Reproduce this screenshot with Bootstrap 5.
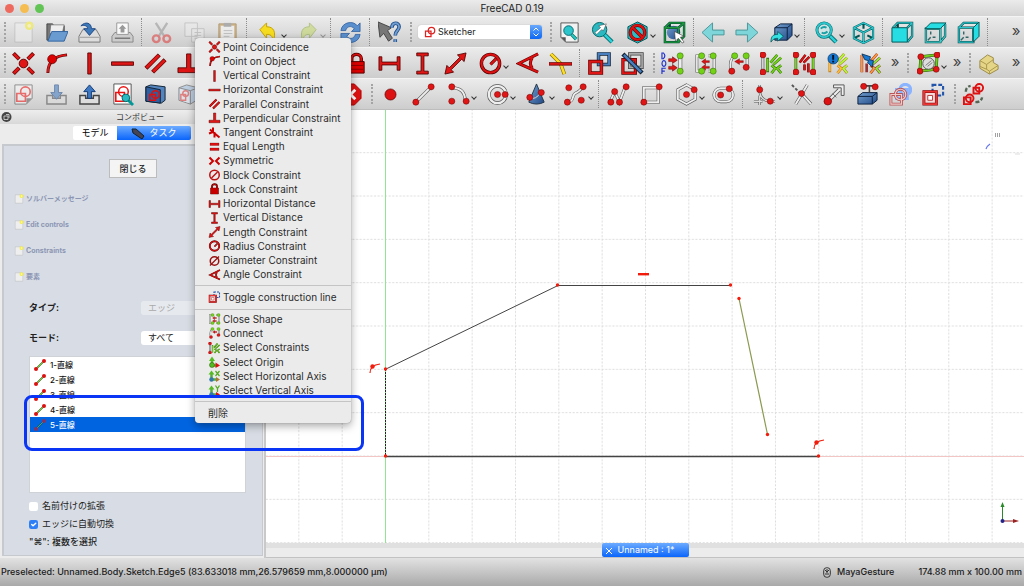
<!DOCTYPE html>
<html lang="ja">
<head>
<meta charset="utf-8">
<meta name="viewport" content="width=device-width, initial-scale=1">
<title>FreeCAD 0.19</title>
<link href="https://cdn.jsdelivr.net/npm/bootstrap@5.3.0/dist/css/bootstrap.min.css" rel="stylesheet">
<style>
body{font-family:Inter,"Noto Sans CJK JP",sans-serif;font-size:10px;line-height:14px;color:#222;background:#ececec}
.titlebar{height:16px;background:linear-gradient(#ebebeb,#d4d4d4);padding-left:5px;gap:6px}
.titlebar i{width:9px;height:9px;border-radius:50%}
.bar{height:31px;background:linear-gradient(#ebebeb,#cdcdcd);border-top:1px solid #f4f4f4;overflow:hidden}
.bar3{height:32px;border-bottom:1px solid #bdbdbd}
.tb{width:33px;height:30px;padding:0;border:0;border-radius:0;flex:none;display:flex;align-items:center;justify-content:center}
.tb svg{width:23px;height:23px;flex:none}
.dd{width:39px;justify-content:flex-start;padding-left:7px;position:relative}
.dd::after{content:"";position:absolute;left:32px;top:16px;width:4px;height:4px;border:solid #333;border-width:0 1px 1px 0;transform:rotate(45deg)}
.dim{opacity:.4}
.faded{opacity:.6}
.grip{flex:none;width:7px;height:20px;border-left:2px dotted #a4a4a4;margin-left:4px;margin-right:-4px}
.sepr{flex:none;width:6px;height:28px;border-left:1px dotted #8c8c8c;margin-left:2px;margin-right:-2px}
.more{width:16px;font-size:15px;color:#444;line-height:15px;padding-bottom:4px}
.combo{width:124px;height:14px;background:#fff;border-radius:3px;overflow:hidden;box-shadow:0 0 1px #999;margin:0 4px 0 5px}
.combo select,.fld{border:0;background:#fff;appearance:none;padding:0;min-width:0;color:#222;outline:0}
.combo select{font-size:9px;height:14px}
.combo .ico{width:12px;height:12px;margin:0 2px 0 6px}
.step{width:12px;height:14px;background:linear-gradient(#6aa9fb,#0a66f3)}
.dock{width:266px;border-right:2px solid #c9c9c9}
.docktitle{height:14px;background:linear-gradient(#ededed,#d8d8d8);font-size:8px;color:#333}
.docktitle svg{left:1px;top:1px}
.tabs{height:20px;padding-top:2px;padding-left:73px}
.tabs button{height:14px;border:0;padding:0;font-size:9px;line-height:14px;background:#fff;width:44px;border-radius:2px 0 0 2px}
.tabs .on{width:74px;background:linear-gradient(#6cabff,#0a65fb);color:#fff;border-radius:0 2px 2px 0}
.pane{background:#d8dde5;border:2px solid #c6c9cd;border-bottom-width:1px;border-right-width:1px;margin:0 1px 2px 2px;padding:13px 16px 0 25px;font-size:9px}
.closebtn{width:48px;height:19px;font-size:9px;line-height:14px;padding:0;border:1px solid #bcbcbc;border-radius:0;background:#f4f4f4;margin-left:80px;font-weight:500}
.sect{height:26px;margin-left:-15px;font-size:7px;font-weight:700;color:#8c96b4;text-decoration:none;gap:2px}
.sect svg{width:10px;height:12px}
.forms{margin-top:3px}
.frow{height:30px;font-weight:700}
.frow label{width:112px}
.fld{height:14px;border-radius:3px;flex:1;padding-left:7px;font-size:9px;line-height:14px}
.fld:disabled{background:#e6e9ee;color:#aaa;opacity:1}
.edges{height:137px;background:#fff;border:1px solid #cfd2d6;font-size:8px;font-weight:500;margin:3px 0 4px}
.edges li{height:15px;padding-left:4px;gap:4px;color:#111}
.edges .sel{background:#0064e1;color:#fff}
.edges svg{width:12px;height:12px}
.crow{height:18px;gap:4px}
.crow input{width:9px;height:9px;margin:0;border-radius:2px;border:0;background-color:#fff}
.crow input:checked{background-color:#2f80f7}
.view{background:#fff}
.view svg{display:block;width:100%;height:100%;position:absolute}
.view .cube{width:70px;height:60px}
.view .triad{width:36px;height:50px}
.doctabs{height:15px;background:linear-gradient(#e0e0e0 5px,#ececec 5px);border-bottom:1px solid #c2c2c2}
.doctabs button{width:87px;height:14px;border:0;border-radius:2px;background:linear-gradient(#6cabff,#0a65fb);color:#fff;font-size:9px;line-height:14px;padding:0 0 0 3px;text-align:left}
.status{height:28px;background:linear-gradient(#e2e2e2,#a9a9a9);padding:0 2px 0 1px;font-size:9px;font-weight:500;color:#1a1a1a}
.status .navi{gap:6px}
.ctx{position:absolute;left:195px;top:38px;width:156px;height:385px;background:#ebebeb;border-radius:4px;box-shadow:0 3px 9px rgba(0,0,0,.35),0 0 1px #888;z-index:5;padding-top:2px}
.ctx div{display:grid;grid-auto-rows:1fr}
.ctx .g1{height:242px}.ctx .g2{height:18px}.ctx .g3{height:86px}
.ctx hr{margin:3px 0 2px;border-color:#aaa;opacity:.6}
.ctx button{border:0;background:none;display:flex;align-items:center;gap:2px;padding:0 0 0 13px;line-height:13px;color:#2c2c2c;text-align:left;white-space:nowrap}
.ctx svg{width:13px;height:12px;flex:none}
.ring{position:absolute;left:24px;top:395px;width:340px;height:56px;border:3px solid #0a35f5;border-radius:8px;z-index:6;pointer-events:none}
</style>
</head>
<body class="d-flex flex-column min-vh-100 m-0">
<svg width="0" height="0" class="position-absolute">
<defs>
<linearGradient id="bl" x2="1" y2="1"><stop stop-color="#729fcf"/><stop offset="1" stop-color="#204a87"/></linearGradient>
<g id="d"><circle r="3.2" fill="#e01515" stroke="#600" stroke-width=".5"/></g>
<g id="gd"><circle r="3.2" fill="#73d216" stroke="#2d5c07" stroke-width=".5"/></g>
</defs>
<symbol id="new" viewBox="0 0 24 24"><path d="M3 2h18v20H3z" fill="#eee" stroke="#aaa" stroke-width=".8"/><circle cx="18" cy="5" r="4.5" fill="#f6ee3c"/><circle cx="18" cy="5" r="2" fill="#fff9b0"/></symbol>
<symbol id="open" viewBox="0 0 24 24"><path d="M2 20V3h6l1 2h11v14z" fill="#777" stroke="#444"/><path d="M6 4h14l-2 9H5z" fill="#eee" stroke="#666" stroke-width=".7"/><path d="M7 11h17l-4 10H3z" fill="#6a9bd0" stroke="#34659f"/></symbol>
<symbol id="save" viewBox="0 0 24 24"><path d="M5 9h14l4 7v6H1v-6z" fill="#ddd" stroke="#777"/><path d="M2 17h20" stroke="#999"/><path d="M3 5c5-5 11-3 11 3h4l-6 7-6-7h4c0-3-3-4-7-3z" fill="#3d78b8" stroke="#204a87"/></symbol>
<symbol id="print" viewBox="0 0 24 24"><path d="M4 12h16l3 4v6H1v-6z" fill="#ccc" stroke="#888"/><path d="M6 2h12v12H6z" fill="#fafafa" stroke="#999"/><path d="M12 4l4 4h-2v4h-4V8H8z" fill="#999"/><path d="M4 18h16" stroke="#777" stroke-width="1.5"/></symbol>
<symbol id="cut" viewBox="0 0 24 24"><path d="M6 2l9 14M18 2L9 16" stroke="#999" stroke-width="2.4"/><circle cx="6.500" cy="18.500" r="3.500" fill="none" stroke="#d44" stroke-width="2.500"/><circle cx="17.500" cy="18.500" r="3.500" fill="none" stroke="#d44" stroke-width="2.500"/></symbol>
<symbol id="copy" viewBox="0 0 24 24"><path d="M2 2h13v14H2zM9 8h13v14H9z" fill="#eee" stroke="#999"/><path d="M12 12h7m-7 3h7m-7 3h5" stroke="#999"/></symbol>
<symbol id="paste" viewBox="0 0 24 24"><path d="M3 3h18v20H3z" fill="#c49a56" stroke="#8f6a2a"/><path d="M5 5h14v16H5z" fill="#f4f4f4"/><path d="M8 2h8v4H8z" fill="#888"/><path d="M8 10h9m-9 3h9m-9 3h6" stroke="#aaa"/></symbol>
<symbol id="undo" viewBox="0 0 24 24"><path d="M3 9l7-7v4c8 0 10 6 7 15-1-6-3-7-7-7v4z" fill="#f5dc1f" stroke="#c4a000"/></symbol>
<symbol id="redo" viewBox="0 0 24 24"><path d="M21 9l-7-7v4c-8 0-10 6-7 15 1-6 3-7 7-7v4z" fill="#b8d43c" stroke="#6a9000"/></symbol>
<symbol id="refresh" viewBox="0 0 24 24"><path d="M2 10C3 1 15-1 19 5l3-3v9h-9l3-3C12 4 8 6 7 10zM22 14c-1 9-13 11-17 5l-3 3v-9h9l-3 3c4 4 8 2 9-2z" fill="#5a8fce" stroke="#2c5c9c" stroke-width=".8"/></symbol>
<symbol id="help" viewBox="0 0 24 24"><path d="M0 1l14 6-4 3 5 8-4 3-5-8-4 4z" fill="#777" stroke="#444"/><path d="M14.500 7c0-6 7.500-6 7.500-1 0 4-4 4-4 9m0 4v3" fill="none" stroke="#1f4d8c" stroke-width="3.800"/><path d="M14.500 7c0-6 7.500-6 7.500-1 0 4-4 4-4 9m0 4v3" fill="none" stroke="#729fcf" stroke-width="1.900"/></symbol>
<symbol id="sk" viewBox="0 0 24 24"><path d="M3 10h11v11H3z" fill="none" stroke="#d22" stroke-width="2.500"/><circle cx="15" cy="9" r="6.500" fill="none" stroke="#d22" stroke-width="2.500"/></symbol>
<symbol id="fit" viewBox="0 0 24 24"><path d="M3 2h18v20H8l-5-5z" fill="#f2f2f2" stroke="#555"/><path d="M3 17h5v5z" fill="#555"/><path d="M14 14l5 5" stroke="#075" stroke-width="3.500"/><path d="M14 14l5 5" stroke="#2cc5cc" stroke-width="2"/><circle cx="11" cy="10" r="5" fill="#2cc5cc" stroke="#0a6a70"/></symbol>
<symbol id="fitsel" viewBox="0 0 24 24"><path d="M14 14l8 8" stroke="#066" stroke-width="4.500"/><path d="M14 14l8 8" stroke="#2cd0d8" stroke-width="2.800"/><circle cx="9" cy="9" r="7.500" fill="#2cb8c0" stroke="#066"/><path d="M4 12l6-5-2-2 8-2-3 7-2-1-5 5z" fill="#fff" stroke="#333" stroke-width=".5"/></symbol>
<symbol id="style" viewBox="0 0 24 24"><path d="M12 1l10 5v12l-10 5-10-5V6z" fill="#25bfc9" stroke="#055"/><circle cx="12" cy="12" r="7.500" fill="none" stroke="#700" stroke-width="3.500"/><path d="M7 7l10 10" stroke="#700" stroke-width="3.500"/><circle cx="12" cy="12" r="7.500" fill="none" stroke="#d11" stroke-width="2.200"/><path d="M7 7l10 10" stroke="#d11" stroke-width="2.200"/></symbol>
<symbol id="bbox" viewBox="0 0 24 24"><circle cx="11" cy="12" r="7" fill="url(#bl)"/><path d="M2 7h14v15H2zM2 7l5-5h15v14l-6 6M16 7l6-5M7 2v4" fill="none" stroke="#043" stroke-width="2.500"/><path d="M2 7h14v15H2zM2 7l5-5h15v14l-6 6M16 7l6-5" fill="none" stroke="#1c9a3c" stroke-width="1.400"/><path d="M12 11l10 5-4 1 4 5-2 1-4-5-3 3z" fill="#fff" stroke="#333" stroke-width=".6"/></symbol>
<symbol id="left" viewBox="0 0 24 24"><path d="M0 12L11 2v7.500h12v5H11V22z" fill="#7fd6da" stroke="#4c9599"/></symbol>
<symbol id="right" viewBox="0 0 24 24"><path d="M24 12L13 2v7.500H1v5h12V22z" fill="#7fd6da" stroke="#4c9599"/></symbol>
<symbol id="link" viewBox="0 0 24 24"><path d="M5 7l6-4h12v12l-5 5H5z" fill="url(#bl)" stroke="#0b1f3d"/><path d="M5 7h13v13M18 7l5-4" fill="none" stroke="#0b1f3d"/><path d="M1 22c0-7 3-8 7-8v-3l6 5-6 5v-3c-3 0-5 1-7 4z" fill="#34e0e2" stroke="#055" stroke-width=".8"/></symbol>
<symbol id="zoomi" viewBox="0 0 24 24"><path d="M14 14l8 8" stroke="#066" stroke-width="4.500"/><path d="M14 14l8 8" stroke="#2cd0d8" stroke-width="2.800"/><circle cx="9.500" cy="9.500" r="7.500" fill="#cfe4e4" stroke="#066" stroke-width="3"/><circle cx="9.500" cy="9.500" r="7.500" fill="none" stroke="#2cc5cc" stroke-width="2"/><path d="M6 8q3-3 6-1m1 4q-3 3-6 1" fill="none" stroke="#1aa0a5" stroke-width="2"/></symbol>
<symbol id="iso" viewBox="0 0 24 24"><path d="M12 2l10 5v11l-10 5-10-5V7zM2 7l10 5 10-5M12 12v11M12 2v6M2 18l6-3m14 3l-6-3" fill="none" stroke="#055" stroke-width="2.200"/><path d="M12 2l10 5v11l-10 5-10-5V7zM2 7l10 5 10-5M12 12v11" fill="none" stroke="#2cc9d0" stroke-width="1.300"/></symbol>
<symbol id="front" viewBox="0 0 24 24"><path d="M2 7l5-5h15v14l-5 6M17 7l5-5M7 2v6" fill="none" stroke="#044" stroke-width="2.400"/><path d="M2 7l5-5h15v14l-5 6M17 7l5-5" fill="none" stroke="#2cc5cc" stroke-width="1.300"/><path d="M1 7h16v15H1z" fill="#25dde3" stroke="#055"/></symbol>
<symbol id="top" viewBox="0 0 24 24"><path d="M2 8h15v14H2zM22 3v13l-5 6" fill="none" stroke="#044" stroke-width="2.400"/><path d="M2 8h15v14H2zM22 3v13l-5 6" fill="none" stroke="#4cc" stroke-width="1.300"/><path d="M7 11v3m0 3l-3 3M9 17h3" stroke="#366" stroke-width="1.500"/><path d="M1 8l6-6h16l-6 6z" fill="#25dde3" stroke="#055"/></symbol>
<symbol id="rightv" viewBox="0 0 24 24"><path d="M2 7h15v15H2zM2 7l5-5h15" fill="none" stroke="#044" stroke-width="2.400"/><path d="M2 7h15v15H2zM2 7l5-5h15" fill="none" stroke="#2cc5cc" stroke-width="1.300"/><path d="M7 11v3m0 3l-3 3M9 17h3" stroke="#366" stroke-width="1.500"/><path d="M17 7l6-6v15l-6 6z" fill="#25dde3" stroke="#055"/></symbol>
<symbol id="coin" viewBox="0 0 24 24"><path d="M1.500 1.500l6 6m9 9l6 6m0-21l-6 6m-9 9l-6 6" stroke="#600" stroke-width="4.200"/><path d="M2 2l5 5m10 10l5 5m0-20l-5 5M7 17l-5 5" stroke="#e01515" stroke-width="2.800"/><circle cx="12" cy="12" r="4.500" fill="#e01515" stroke="#600"/></symbol>
<symbol id="pobj" viewBox="0 0 24 24"><path d="M3 22C3 10 10 4 23 3" fill="none" stroke="#500" stroke-width="3"/><path d="M3 21.500C3 10 10 4 22.500 3" fill="none" stroke="#e01515" stroke-width="1.900"/><circle cx="7.500" cy="7.500" r="4.700" fill="#d00" stroke="#500" stroke-width=".7"/></symbol>
<symbol id="vert" viewBox="0 0 24 24"><path d="M10.200 1h3.600v22h-3.600z" fill="#e01515" stroke="#500" stroke-width=".9"/></symbol>
<symbol id="hori" viewBox="0 0 24 24"><path d="M.5 10.300h23v3.600h-23z" fill="#e01515" stroke="#500" stroke-width=".9"/></symbol>
<symbol id="para" viewBox="0 0 24 24"><path d="M2 17L16 3M9 21L22 8" stroke="#600" stroke-width="4.400"/><path d="M2.500 16.500l13-13M9.500 20.500l12-12" stroke="#e01515" stroke-width="3"/></symbol>
<symbol id="perp" viewBox="0 0 24 24"><path d="M10 2h4.500v14.500H23v5H1v-5h9z" fill="#e01515" stroke="#500" stroke-width=".9"/></symbol>
<symbol id="tang" viewBox="0 0 24 24"><path d="M3 5l19 16M9 1v9l-8 3m11-3v11" fill="none" stroke="#c00" stroke-width="4"/></symbol>
<symbol id="equal" viewBox="0 0 24 24"><path d="M3 4h18v5H3zM3 14h18v5H3z" fill="#d11" stroke="#500" stroke-width=".5"/></symbol>
<symbol id="symm" viewBox="0 0 24 24"><path d="M2 5l7 7-7 7M22 5l-7 7 7 7" fill="none" stroke="#c00" stroke-width="4"/></symbol>
<symbol id="block" viewBox="0 0 24 24"><circle cx="12" cy="12" r="9.500" fill="none" stroke="#b11" stroke-width="3"/><path d="M18 6L6 18" stroke="#b11" stroke-width="3"/></symbol>
<symbol id="lock" viewBox="0 0 24 24"><path d="M7 11V7c0-6 10-6 10 0v4" fill="none" stroke="#500" stroke-width="3.600"/><path d="M7 11V7c0-6 10-6 10 0v4" fill="none" stroke="#d11" stroke-width="2"/><path d="M4 10h16v12H4z" fill="#d00" stroke="#500"/><path d="M5 14h14M5 18h14" stroke="#800"/></symbol>
<symbol id="hd" viewBox="0 0 24 24"><path d="M1 5h3v5.500h16V5h3v14h-3v-5.500H4V19H1z" fill="#e01515" stroke="#500" stroke-width=".9"/></symbol>
<symbol id="vd" viewBox="0 0 24 24"><path d="M6 1h12v3h-4.500v16H18v3H6v-3h4.500V4H6z" fill="#e01515" stroke="#500" stroke-width=".9"/></symbol>
<symbol id="len" viewBox="0 0 24 24"><path d="M23 1l-2 9-2.500-2.500-11 11L10 21l-9 2 2-9 2.500 2.500 11-11L14 3z" fill="#e01515" stroke="#500" stroke-width=".9"/></symbol>
<symbol id="rad" viewBox="0 0 24 24"><circle cx="12" cy="12" r="9.500" fill="none" stroke="#500" stroke-width="3.600"/><path d="M12 13l6-6" stroke="#500" stroke-width="3.400"/><circle cx="12" cy="12" r="9.500" fill="none" stroke="#d11" stroke-width="2.300"/><path d="M12 13l6-6" stroke="#d11" stroke-width="2"/></symbol>
<symbol id="dia" viewBox="0 0 24 24"><circle cx="12" cy="12" r="8.500" fill="none" stroke="#911" stroke-width="3"/><path d="M21 3L3 21" stroke="#911" stroke-width="2.600"/></symbol>
<symbol id="ang" viewBox="0 0 24 24"><path d="M23 2L3 12l20 9M17 6q-4 6 0 11" fill="none" stroke="#600" stroke-width="3.200"/><path d="M23 2L3 12l20 9M17 6q-4 6 0 11" fill="none" stroke="#d11" stroke-width="2"/></symbol>
<symbol id="snell" viewBox="0 0 24 24"><path d="M2 2l10 10 4 11" fill="none" stroke="#760" stroke-width="3.800"/><path d="M2 2l10 10 4 11" fill="none" stroke="#fd2" stroke-width="2.600"/><path d="M0 11h24v2.800H0z" fill="#e01515" stroke="#500" stroke-width=".7"/></symbol>
<symbol id="tog" viewBox="0 0 24 24"><path d="M11 2h11v11H11z" fill="none" stroke="#123" stroke-width="3.600"/><path d="M11 2h11v11H11z" fill="none" stroke="#4a7fc0" stroke-width="2.200"/><path d="M2 10h12v12H2z" fill="none" stroke="#500" stroke-width="3.600"/><path d="M2 10h12v12H2z" fill="none" stroke="#e01515" stroke-width="2.300"/></symbol>
<symbol id="act" viewBox="0 0 24 24"><path d="M9 2h13v14H9z" fill="none" stroke="#444" stroke-width="3.300"/><path d="M9 2h13v14H9z" fill="none" stroke="#aaa" stroke-width="1.700"/><path d="M2 8h13v14H2z" fill="none" stroke="#500" stroke-width="3.300"/><path d="M2 8h13v14H2z" fill="none" stroke="#e01515" stroke-width="2"/><path d="M2 2l20 20" stroke="#123" stroke-width="4.500"/><path d="M3 3l18 18" stroke="#4a7fc0" stroke-width="2.600"/></symbol>
<symbol id="dof" viewBox="0 0 24 24"><g fill="none" stroke="#23c" stroke-width="1.200"><path d="M1 1v6h1.500q3-3 0-6zM3 9a2 3 0 1 0 .1 0zM1 23v-6h4M1 20h3"/></g><path d="M20 4v16" stroke="#666" stroke-width="4.400"/><path d="M20 4v16" stroke="#eee" stroke-width="3"/><path d="M8 7h4V5l5 3.500L12 12v-2H8zM8 15h4v-2l5 3.500L12 20v-2H8z" fill="#e01515" stroke="#500" stroke-width=".5"/><use href="#gd" x="20" y="4"/><use href="#gd" x="20" y="20"/></symbol>
<symbol id="close" viewBox="0 0 24 24"><path d="M9 4H3v16h6M15 20h6V4h-6" fill="none" stroke="#666" stroke-width="3"/><path d="M9 4H3v16h6M15 20h6V4h-6" fill="none" stroke="#eee" stroke-width="1.700"/><path d="M16 9h-4V7L8 10l4 3v-2h4zM16 15h-4v-2l-4 3 4 3v-2h4z" fill="#d11" stroke="#500" stroke-width=".4"/><use href="#gd" x="8" y="4"/><use href="#gd" x="8" y="20"/><use href="#gd" x="20" y="4"/><use href="#gd" x="20" y="20"/></symbol>
<symbol id="conn" viewBox="0 0 24 24"><path d="M8 4Q2 8 4 18M21 4v14" fill="none" stroke="#666" stroke-width="3"/><path d="M8 4Q2 8 4 18M21 4v14" fill="none" stroke="#eee" stroke-width="1.700"/><path d="M17 9h-4V7L8 10l5 3v-2h4z" fill="#d11" stroke="#500" stroke-width=".4"/><use href="#gd" x="8" y="4"/><use href="#gd" x="20" y="4"/><use href="#d" x="5" y="20"/><use href="#d" x="20" y="16"/></symbol>
<symbol id="selc" viewBox="0 0 24 24"><path d="M3 3v18" stroke="#555" stroke-width="3"/><path d="M3 3v18" stroke="#eee" stroke-width="1.500"/><path d="M8 6v15M11 11l7-8M14 13l8-7M12 14l4 3-4 5M22 14l-4 3 4 5" fill="none" stroke="#2d6c07" stroke-width="2.800"/><path d="M8 7v13M11 11l7-8M14 13l8-7M12 14l4 3-4 5M22 14l-4 3 4 5" fill="none" stroke="#73d216" stroke-width="1.800"/><use href="#d" x="3" y="3"/><use href="#d" x="3" y="21"/></symbol>
<symbol id="sele" viewBox="0 0 24 24"><path d="M3 3v18M21 3v18" stroke="#2d5c07" stroke-width="2.800"/><path d="M3 3v18M21 3v18" stroke="#8d3" stroke-width="1.600"/><path d="M7 11l6-8M11 11l6-6M12 13v6M16 12v9" stroke="#500" stroke-width="2.600"/><path d="M7 11l6-8M11 11l6-6M12 13v6M16 12v9" stroke="#d11" stroke-width="1.800"/><use href="#d" x="3" y="3"/><use href="#d" x="3" y="21"/><use href="#d" x="21" y="3"/><use href="#d" x="21" y="21"/></symbol>
<symbol id="red" viewBox="0 0 24 24"><path d="M4 6v15M12 10l7-8M14 13l8-7M12 14l4 3-4 5M22 14l-4 3 4 5" fill="none" stroke="#b72" stroke-width="2.800"/><path d="M4 7v13M12 14l4 3-4 5" fill="none" stroke="#fb3" stroke-width="1.800"/><path d="M12 10l7-8M14 13l8-7M22 14l-4 3 4 5" fill="none" stroke="#af3" stroke-width="1.800"/><circle cx="7.500" cy="7" r="5.500" fill="#1779d4" stroke="#024" stroke-width=".6"/><path d="M7.500 3v5m0 1v2" stroke="#012" stroke-width="2"/></symbol>
<symbol id="conf" viewBox="0 0 24 24"><path d="M3 3v18M8 12v9M12 10l7-8M14 13l8-7M12 14l4 3-4 5M22 14l-4 3 4 5" fill="none" stroke="#933" stroke-width="2.800"/><path d="M3 3v18M12 10l7-8M12 14l4 3-4 5" fill="none" stroke="#f93" stroke-width="1.800"/><path d="M14 13l8-7M22 14l-4 3 4 5" fill="none" stroke="#8e3" stroke-width="1.800"/><path d="M3 2l9 3-1 3 4 1-1 7-5-5 1-2-4-1z" fill="#1779d4" stroke="#024" stroke-width=".8"/></symbol>
<symbol id="intal" viewBox="0 0 24 24"><path d="M4 5L21 3l-1 15-17 2z" fill="none" stroke="#250" stroke-width="3"/><path d="M4 5L21 3l-1 15-17 2z" fill="none" stroke="#7c2" stroke-width="2"/><circle cx="12" cy="12" r="6" fill="#ddd" stroke="#555"/><path d="M9 14l6-5m-4 6l5-4" stroke="#777"/><use href="#d" x="4" y="5"/><use href="#d" x="21" y="3"/><use href="#d" x="20" y="18"/><use href="#d" x="3" y="20"/></symbol>
<symbol id="pad" viewBox="0 0 24 24"><path d="M3 9l8-6 6 3v5l5 3v4l-9 5-10-6z" fill="#e5d586" stroke="#9a8a48"/><path d="M3 9l7 4 7-5m-7 5v5l3 2 9-6m-9 6v3M3 15l7 3" fill="none" stroke="#a8964c"/></symbol>
<symbol id="nsk" viewBox="0 0 24 24"><path d="M3 2h18v14l-6 6H3z" fill="#f4f4f4" stroke="#555"/><path d="M15 22v-6h6z" fill="#666"/><path d="M5 11h9v8H5z" fill="none" stroke="#e22" stroke-width="1.700"/><circle cx="14" cy="9" r="5" fill="none" stroke="#e22" stroke-width="1.700"/></symbol>
<symbol id="tray" viewBox="0 0 24 24"><path d="M2 13h6v3h8v-3h6v9H2z" fill="#ddd" stroke="#555" stroke-width="1.500"/><path d="M10 2h4v8h4l-6 7-6-7h4z" fill="#4a80c0" stroke="#204a87"/></symbol>
<symbol id="leave" viewBox="0 0 24 24"><path d="M2 13h6v3h8v-3h6v9H2z" fill="#ddd" stroke="#444" stroke-width="1.500"/><path d="M10 16V9H6l6-7 6 7h-4v7z" fill="#3d78c0" stroke="#123a77"/></symbol>
<symbol id="vsk" viewBox="0 0 24 24"><path d="M3 1h18v21H3z" fill="#fff" stroke="#555"/><path d="M5 10h9v9H5z" fill="none" stroke="#e11" stroke-width="1.600"/><circle cx="13" cy="9" r="5" fill="none" stroke="#e11" stroke-width="1.600"/><path d="M17 17l6 6" stroke="#099" stroke-width="3"/><circle cx="15.500" cy="15.500" r="4" fill="#2cb8c0" stroke="#066"/></symbol>
<symbol id="vsec" viewBox="0 0 24 24"><path d="M2 4l5-2 15 2v14l-4 3L2 19z" fill="#5484bd" stroke="#123"/><path d="M2 4l15 3v14L2 19z" fill="#2f5f9f" stroke="#123"/><path d="M6 12h6v6H6z" fill="none" stroke="#d11" stroke-width="1.600"/><circle cx="12" cy="12" r="4" fill="none" stroke="#d11" stroke-width="1.600"/></symbol>
<symbol id="map" viewBox="0 0 24 24"><path d="M2 5l8-3 12 3v12l-8 5-12-4z" fill="#a9c4e3" stroke="#555"/><path d="M2 5l12 3v14M14 8l8-3" fill="none" stroke="#555"/><path d="M3 6l10 3v12L3 18z" fill="#e4eaf2"/><circle cx="9" cy="11" r="3" fill="none" stroke="#d44" stroke-width="1.500"/><path d="M4 12h5v6H4z" fill="none" stroke="#d44" stroke-width="1.500"/></symbol>
<symbol id="stop" viewBox="0 0 24 24"><path d="M8 1h8l7 7v8l-7 7H8l-7-7V8z" fill="#d11" stroke="#a00"/><path d="M7 7l10 10M17 7L7 17" stroke="#fff" stroke-width="3"/></symbol>
<symbol id="pt" viewBox="0 0 24 24"><circle cx="12" cy="12" r="5.800" fill="#d11" stroke="#500" stroke-width=".7"/></symbol>
<symbol id="line" viewBox="0 0 24 24"><path d="M5 19L19 5" stroke="#555" stroke-width="3.200"/><path d="M5 19L19 5" stroke="#eee" stroke-width="2"/><use href="#d" x="4" y="20"/><use href="#d" x="20" y="4"/></symbol>
<symbol id="arc" viewBox="0 0 24 24"><path d="M5 5Q19 5 19 19" fill="none" stroke="#555" stroke-width="3.200"/><path d="M5 5Q19 5 19 19" fill="none" stroke="#eee" stroke-width="2"/><use href="#d" x="5" y="4"/><use href="#d" x="5" y="19"/><use href="#d" x="20" y="19"/></symbol>
<symbol id="circ" viewBox="0 0 24 24"><circle cx="12" cy="12" r="9" fill="none" stroke="#555" stroke-width="3.800"/><circle cx="12" cy="12" r="9" fill="none" stroke="#eee" stroke-width="2.500"/><use href="#d" x="12" y="12"/><use href="#d" x="20" y="12"/></symbol>
<symbol id="cone" viewBox="0 0 24 24"><path d="M12 1l8 19q-8 4-16 0z" fill="url(#bl)" stroke="#234"/><path d="M4 15q7 4 13-6" fill="none" stroke="#ddd"/><use href="#d" x="5" y="15"/><use href="#d" x="17" y="10"/></symbol>
<symbol id="bsp" viewBox="0 0 24 24"><path d="M4 20c8-1 3-8 9-10 3-1 4-3 7-6" fill="none" stroke="#555" stroke-width="3"/><path d="M4 20c8-1 3-8 9-10 3-1 4-3 7-6" fill="none" stroke="#eee" stroke-width="1.900"/><use href="#d" x="3.500" y="20"/><use href="#d" x="5" y="5"/><use href="#d" x="20" y="4"/><use href="#d" x="18" y="18"/></symbol>
<symbol id="poly" viewBox="0 0 24 24"><path d="M3 20L8 9l5 11 6-16" fill="none" stroke="#555" stroke-width="3"/><path d="M3 20L8 9l5 11 6-16" fill="none" stroke="#eee" stroke-width="1.900"/><use href="#d" x="4" y="20"/><use href="#d" x="8" y="9"/><use href="#d" x="13" y="20"/><use href="#d" x="20" y="4"/></symbol>
<symbol id="rect" viewBox="0 0 24 24"><path d="M4 5h15v15H4z" fill="none" stroke="#555" stroke-width="3.200"/><path d="M4 5h15v15H4z" fill="none" stroke="#eee" stroke-width="2"/><use href="#d" x="4" y="20"/><use href="#d" x="20" y="4"/></symbol>
<symbol id="hex" viewBox="0 0 24 24"><path d="M12 2l9 5v10l-9 5-9-5V7z" fill="none" stroke="#555" stroke-width="3"/><path d="M12 2l9 5v10l-9 5-9-5V7z" fill="none" stroke="#eee" stroke-width="1.900"/><use href="#d" x="12" y="12"/><use href="#d" x="20" y="7"/></symbol>
<symbol id="slot" viewBox="0 0 24 24"><rect x="2" y="5.500" width="20" height="14" rx="7" fill="none" stroke="#555" stroke-width="3"/><rect x="2" y="5.500" width="20" height="14" rx="7" fill="none" stroke="#eee" stroke-width="1.900"/><use href="#d" x="9" y="12.500"/><use href="#d" x="18" y="6"/></symbol>
<symbol id="fil" viewBox="0 0 24 24"><path d="M7 2v7q1 9 10 10h6M10 19H1m6-6v10" fill="none" stroke="#555" stroke-width="2.600"/><path d="M7 2v7q1 9 10 10h6M10 19H1m6-6v10" fill="none" stroke="#ddd" stroke-width="1.400"/><use href="#d" x="7" y="7"/><use href="#d" x="18" y="19"/></symbol>
<symbol id="trim" viewBox="0 0 24 24"><path d="M18 2L6 22M12 11l10 11" stroke="#555" stroke-width="3.200"/><path d="M18 2L6 22M12 11l10 11" stroke="#eee" stroke-width="2"/><path d="M2 2l9 9" stroke="#555" stroke-width="2" stroke-dasharray="3 2"/><use href="#d" x="12" y="11"/></symbol>
<symbol id="ext" viewBox="0 0 24 24"><path d="M5 19l12-12" stroke="#555" stroke-width="4"/><path d="M5 19l13-13" stroke="#eee" stroke-width="2.400"/><path d="M11 2h11v11h-3V5h-8z" fill="#eee" stroke="#555"/><path d="M10 11l4 4" stroke="#555" stroke-width=".8"/><circle cx="5" cy="19" r="4" fill="#d11" stroke="#500" stroke-width=".6"/></symbol>
<symbol id="xgeo" viewBox="0 0 24 24"><path d="M2 14l5-4h15v8l-5 4H2z" fill="url(#bl)" stroke="#0b1f3d"/><path d="M2 14h15v8m0-8l5-4" fill="none" stroke="#0b1f3d"/><path d="M8 3h12M14 4v6" stroke="#444" stroke-width="1.600"/><use href="#d" x="8" y="3.500"/><use href="#d" x="20" y="4"/></symbol>
<symbol id="carb" viewBox="0 0 24 24"><g fill="none" stroke="#8ab4ff" stroke-width="3.400"><path d="M8 7h11v9H8z"/><circle cx="17" cy="7" r="5.500"/></g><g fill="none" stroke="#b55" stroke-width="3"><path d="M2 12h11v10H2z"/><circle cx="12" cy="12" r="5.500"/></g><g fill="none" stroke="#ecc" stroke-width="1.200"><path d="M2 12h11v10H2z"/><circle cx="12" cy="12" r="5.500"/></g></symbol>
<symbol id="cons" viewBox="0 0 24 24"><path d="M11 2h11v11H11z" fill="none" stroke="#25a" stroke-width="2.200" stroke-dasharray="4 2"/><path d="M2 9h13v13H2z" fill="#f3dcdc" stroke="#700" stroke-width="3"/><path d="M2 9h13v13H2z" fill="none" stroke="#e33" stroke-width="2"/><path d="M6 13h5v5H6z" fill="#fff" stroke="#b33"/></symbol>
<symbol id="mir" viewBox="0 0 24 24"><g fill="none" stroke="#d11" stroke-width="2"><path d="M12 5h6v6h-6zM2 15h7v7H2z"/><circle cx="18" cy="5" r="4"/><circle cx="8" cy="16" r="4"/></g><path d="M4 9q0-5 5-6M14 20q6 0 7-5" fill="none" stroke="#565" stroke-width="2.500" stroke-dasharray="4 2"/></symbol>
<symbol id="eline" viewBox="0 0 24 24"><path d="M4 20L20 4" stroke="#250" stroke-width="3.500"/><path d="M4 20L20 4" stroke="#7c3" stroke-width="2"/><circle cx="4" cy="20" r="4" fill="#d11"/><circle cx="20" cy="4" r="4" fill="#d11"/></symbol>
<symbol id="so" viewBox="0 0 24 24"><path d="M7 20V8M8 19h9" stroke="#5b2" stroke-width="5"/><path d="M1 10l6-9 6 9z" fill="#5b2"/><path d="M14 13l9 6-9 5z" fill="#d11"/><circle cx="7" cy="18" r="5" fill="#5b2" stroke="#250"/></symbol>
<symbol id="sh" viewBox="0 0 24 24"><path d="M6 20V6M8 19h9" stroke="#5a4" stroke-width="5"/><path d="M0 9l6-8 6 8z" fill="#5b2"/><path d="M15 14l8 5-8 5z" fill="#a73"/><circle cx="6" cy="19" r="4.500" fill="#37a"/><path d="M14 2l8 10m0-10l-8 10" stroke="#5a2" stroke-width="2.500"/></symbol>
<symbol id="sv" viewBox="0 0 24 24"><path d="M6 20V6M8 19h9" stroke="#5a4" stroke-width="5"/><path d="M0 9l6-8 6 8z" fill="#5b2"/><path d="M15 14l8 5-8 5z" fill="#d11"/><circle cx="6" cy="19" r="4.500" fill="#37a"/><path d="M14 1l4 6 4-6m-4 6v7" fill="none" stroke="#5a2" stroke-width="2.500"/></symbol>
<symbol id="onobj" viewBox="0 0 12 12"><path d="M1 10Q1 2 11 1" fill="none" stroke="#f21c0c" stroke-width="1.200"/><circle cx="3.500" cy="3.500" r="2.200" fill="#f21c0c"/></symbol>
</svg>

<header class="titlebar d-flex align-items-center position-relative">
<i style="background:#ee6a5f"></i><i style="background:#f5bd4f"></i><i style="background:#61c454"></i>
<span class="position-absolute start-0 end-0 text-center">FreeCAD 0.19</span>
</header>

<nav class="bar d-flex align-items-center" aria-label="File and view">
<span class="grip"></span>
<button class="btn tb" aria-label="New"><svg class="faded"><use href="#new"/></svg></button>
<button class="btn tb" aria-label="Open"><svg><use href="#open"/></svg></button>
<button class="btn tb" aria-label="Save"><svg><use href="#save"/></svg></button>
<button class="btn tb" aria-label="Print"><svg><use href="#print"/></svg></button>
<span class="sepr"></span>
<button class="btn tb" aria-label="Cut"><svg class="faded"><use href="#cut"/></svg></button>
<button class="btn tb" aria-label="Copy"><svg class="dim"><use href="#copy"/></svg></button>
<button class="btn tb" aria-label="Paste"><svg class="faded"><use href="#paste"/></svg></button>
<span class="sepr"></span>
<button class="btn tb dd" aria-label="Undo"><svg><use href="#undo"/></svg></button>
<button class="btn tb dd dim" aria-label="Redo"><svg><use href="#redo"/></svg></button>
<span class="sepr"></span>
<button class="btn tb" aria-label="Refresh"><svg><use href="#refresh"/></svg></button>
<span class="sepr"></span>
<button class="btn tb" aria-label="What's this"><svg><use href="#help"/></svg></button>
<span class="grip"></span>
<div class="combo d-flex align-items-center flex-shrink-0"><svg class="ico"><use href="#sk"/></svg><select class="flex-grow-1" aria-label="Workbench"><option>Sketcher</option></select><svg class="step" viewBox="0 0 12 14"><path d="M3.500 5.500L6 3l2.500 2.500M3.500 8.500L6 11l2.500-2.500" fill="none" stroke="#fff"/></svg></div>
<span class="grip"></span>
<button class="btn tb" aria-label="Fit all"><svg><use href="#fit"/></svg></button>
<button class="btn tb" aria-label="Fit selection"><svg><use href="#fitsel"/></svg></button>
<button class="btn tb dd" aria-label="Draw style"><svg><use href="#style"/></svg></button>
<button class="btn tb" aria-label="Bounding box"><svg><use href="#bbox"/></svg></button>
<span class="sepr"></span>
<button class="btn tb" aria-label="Back"><svg><use href="#left"/></svg></button>
<button class="btn tb" aria-label="Forward"><svg><use href="#right"/></svg></button>
<button class="btn tb dd" aria-label="Go to linked object"><svg><use href="#link"/></svg></button>
<span class="sepr"></span>
<button class="btn tb dd" aria-label="Sync view"><svg><use href="#zoomi"/></svg></button>
<button class="btn tb" aria-label="Isometric"><svg><use href="#iso"/></svg></button>
<span class="sepr"></span>
<button class="btn tb" aria-label="Front"><svg><use href="#front"/></svg></button>
<button class="btn tb" aria-label="Top"><svg><use href="#top"/></svg></button>
<button class="btn tb" aria-label="Right"><svg><use href="#rightv"/></svg></button>
<span class="sepr"></span>
<button class="btn tb more ms-auto" aria-label="More">»</button>
</nav>

<nav class="bar d-flex align-items-center" aria-label="Constraints">
<span class="grip"></span>
<button class="btn tb" aria-label="Coincident"><svg><use href="#coin"/></svg></button>
<button class="btn tb" aria-label="Point on object"><svg><use href="#pobj"/></svg></button>
<button class="btn tb" aria-label="Vertical"><svg><use href="#vert"/></svg></button>
<button class="btn tb" aria-label="Horizontal"><svg><use href="#hori"/></svg></button>
<button class="btn tb" aria-label="Parallel"><svg><use href="#para"/></svg></button>
<button class="btn tb" aria-label="Perpendicular"><svg><use href="#perp"/></svg></button>
<button class="btn tb" aria-label="Tangent"><svg><use href="#tang"/></svg></button>
<button class="btn tb" aria-label="Equal"><svg><use href="#equal"/></svg></button>
<button class="btn tb me-4" aria-label="Symmetric"><svg><use href="#symm"/></svg></button>
<span class="sepr"></span><span class="sepr"></span>
<button class="btn tb" aria-label="Lock"><svg><use href="#lock"/></svg></button>
<button class="btn tb" aria-label="Horizontal distance"><svg><use href="#hd"/></svg></button>
<button class="btn tb" aria-label="Vertical distance"><svg><use href="#vd"/></svg></button>
<button class="btn tb" aria-label="Length"><svg><use href="#len"/></svg></button>
<button class="btn tb dd" aria-label="Radius"><svg><use href="#rad"/></svg></button>
<button class="btn tb" aria-label="Angle"><svg><use href="#ang"/></svg></button>
<button class="btn tb" aria-label="Snell's law"><svg><use href="#snell"/></svg></button>
<span class="sepr"></span>
<button class="btn tb" aria-label="Toggle driving"><svg><use href="#tog"/></svg></button>
<button class="btn tb" aria-label="Toggle active"><svg><use href="#act"/></svg></button>
<span class="grip"></span>
<button class="btn tb" aria-label="Select DOF"><svg><use href="#dof"/></svg></button>
<button class="btn tb" aria-label="Close shape"><svg><use href="#close"/></svg></button>
<button class="btn tb" aria-label="Connect"><svg><use href="#conn"/></svg></button>
<button class="btn tb" aria-label="Select constraints"><svg><use href="#selc"/></svg></button>
<button class="btn tb" aria-label="Select elements"><svg><use href="#sele"/></svg></button>
<button class="btn tb" aria-label="Redundant"><svg><use href="#red"/></svg></button>
<button class="btn tb" aria-label="Conflicting"><svg><use href="#conf"/></svg></button>
<button class="btn tb more" aria-label="More">»</button>
<span class="grip"></span>
<button class="btn tb dd" aria-label="Internal alignment"><svg><use href="#intal"/></svg></button>
<button class="btn tb more" aria-label="More">»</button>
<span class="grip"></span>
<button class="btn tb" aria-label="Pad"><svg><use href="#pad"/></svg></button>
<button class="btn tb more ms-auto" aria-label="More">»</button>
</nav>

<nav class="bar bar3 d-flex align-items-center" aria-label="Geometry">
<span class="grip"></span>
<button class="btn tb" aria-label="New sketch"><svg class="faded"><use href="#nsk"/></svg></button>
<button class="btn tb" aria-label="Edit sketch"><svg class="faded"><use href="#tray"/></svg></button>
<button class="btn tb" aria-label="Leave sketch"><svg><use href="#leave"/></svg></button>
<button class="btn tb" aria-label="View sketch"><svg><use href="#vsk"/></svg></button>
<button class="btn tb" aria-label="View section"><svg><use href="#vsec"/></svg></button>
<button class="btn tb" aria-label="Map sketch"><svg class="faded"><use href="#map"/></svg></button>
<button class="btn tb" aria-label="Reorient"><svg><use href="#nsk"/></svg></button>
<button class="btn tb" aria-label="Validate"><svg><use href="#vsk"/></svg></button>
<button class="btn tb me-4" aria-label="Merge"><svg><use href="#mir"/></svg></button>
<span class="sepr"></span>
<button class="btn tb" aria-label="Stop operation"><svg><use href="#stop"/></svg></button>
<span class="grip"></span>
<button class="btn tb" aria-label="Point"><svg><use href="#pt"/></svg></button>
<button class="btn tb" aria-label="Line"><svg><use href="#line"/></svg></button>
<button class="btn tb dd" aria-label="Arc"><svg><use href="#arc"/></svg></button>
<button class="btn tb dd" aria-label="Circle"><svg><use href="#circ"/></svg></button>
<button class="btn tb dd" aria-label="Conic"><svg><use href="#cone"/></svg></button>
<button class="btn tb dd" aria-label="B-spline"><svg><use href="#bsp"/></svg></button>
<span class="sepr"></span>
<button class="btn tb" aria-label="Polyline"><svg><use href="#poly"/></svg></button>
<button class="btn tb" aria-label="Rectangle"><svg><use href="#rect"/></svg></button>
<button class="btn tb dd" aria-label="Polygon"><svg><use href="#hex"/></svg></button>
<button class="btn tb" aria-label="Slot"><svg><use href="#slot"/></svg></button>
<span class="sepr"></span>
<button class="btn tb dd" aria-label="Fillet"><svg><use href="#fil"/></svg></button>
<button class="btn tb" aria-label="Trim"><svg><use href="#trim"/></svg></button>
<button class="btn tb" aria-label="Extend"><svg><use href="#ext"/></svg></button>
<button class="btn tb" aria-label="External geometry"><svg><use href="#xgeo"/></svg></button>
<button class="btn tb" aria-label="Carbon copy"><svg><use href="#carb"/></svg></button>
<button class="btn tb" aria-label="Toggle construction"><svg><use href="#cons"/></svg></button>
<span class="grip"></span>
<button class="btn tb" aria-label="Virtual space"><svg><use href="#mir"/></svg></button>
</nav>

<main class="d-flex flex-grow-1">
<aside class="dock d-flex flex-column flex-shrink-0">
<div class="docktitle position-relative text-center ps-3"><svg class="position-absolute" width="11" height="12" viewBox="0 0 11 12"><circle cx="5.500" cy="6" r="5" fill="#444"/><path d="M3 5h4v3.500H3zM5 3.500h3V7" fill="none" stroke="#ddd" stroke-width=".8"/></svg>コンポビュー</div>
<div class="tabs d-flex"><button>モデル</button><button class="on"><svg width="14" height="12" viewBox="0 0 14 12" class="me-1"><path d="M1 1l4 0 8 7-2 3-9-6z" fill="#445" stroke="#123"/></svg>タスク</button></div>
<section class="pane flex-grow-1 d-flex flex-column">
<button class="closebtn btn">閉じる</button>
<div class="mt-2 d-flex flex-column">
<a href="#" class="sect d-flex align-items-center"><svg viewBox="0 0 24 24"><use href="#new"/></svg>ソルバーメッセージ</a>
<a href="#" class="sect d-flex align-items-center"><svg viewBox="0 0 24 24"><use href="#new"/></svg>Edit controls</a>
<a href="#" class="sect d-flex align-items-center"><svg viewBox="0 0 24 24"><use href="#new"/></svg>Constraints</a>
<a href="#" class="sect d-flex align-items-center"><svg viewBox="0 0 24 24"><use href="#new"/></svg>要素</a>
</div>
<div class="forms">
<div class="frow d-flex align-items-center"><label for="ty">タイプ:</label><select id="ty" class="fld" disabled><option>エッジ</option></select></div>
<div class="frow d-flex align-items-center"><label for="mo">モード:</label><select id="mo" class="fld"><option>すべて</option></select></div>
</div>
<ul class="edges list-unstyled">
<li class="d-flex align-items-center"><svg><use href="#eline"/></svg>1-直線</li>
<li class="d-flex align-items-center"><svg><use href="#eline"/></svg>2-直線</li>
<li class="d-flex align-items-center"><svg><use href="#eline"/></svg>3-直線</li>
<li class="d-flex align-items-center"><svg><use href="#eline"/></svg>4-直線</li>
<li class="sel d-flex align-items-center"><svg class="faded"><use href="#eline"/></svg>5-直線</li>
</ul>
<div class="crow d-flex align-items-center"><input class="form-check-input" type="checkbox" id="c1"><label for="c1">名前付けの拡張</label></div>
<div class="crow d-flex align-items-center"><input class="form-check-input" type="checkbox" id="c2" checked><label for="c2">エッジに自動切換</label></div>
<div class="crow d-flex align-items-center fw-medium">"⌘": 複数を選択</div>
</section>
</aside>
<section class="d-flex flex-column flex-grow-1">
<div class="view flex-grow-1 position-relative overflow-hidden">
<svg>
<defs><pattern id="grid" x="119" y="345.500" width="43.330" height="43.330" patternUnits="userSpaceOnUse"><path d="M.5 0v43.330M0 .5h43.330" stroke="#dcdcdc" stroke-dasharray="2 1.600"/></pattern></defs>
<rect width="100%" height="100%" fill="url(#grid)"/>
<rect x="0" y="346" width="100%" height="1" fill="#f3c6c6"/><rect x="119" y="0" width="1" height="100%" fill="#90e690"/>
<path d="M120 259L292 175.500h173" fill="none" stroke="#444"/>
<path d="M119.500 259v87" stroke="#222" stroke-dasharray="2 1"/>
<path d="M120 346.500h433" stroke="#444" stroke-width="1.400"/>
<path d="M473 188.500l28.500 136" stroke="#8a9a50" stroke-width="1.200"/>
<g fill="#f21c0c"><circle cx="119.500" cy="259" r="1.700"/><circle cx="119.500" cy="346" r="1.700"/><circle cx="291.500" cy="175" r="1.700"/><circle cx="464.500" cy="175" r="1.700"/><circle cx="473" cy="188.500" r="1.700"/><circle cx="501.500" cy="324.500" r="1.700"/><circle cx="552.500" cy="346" r="1.700"/><path d="M372 163h11v2.400h-11z"/></g>
<use href="#onobj" x="103" y="253" width="12" height="12"/><use href="#onobj" x="547" y="329" width="12" height="12"/>
</svg>
<svg class="cube end-0 top-0"><path d="M41.500 23v4m2-4v4m2-4v4" stroke="#888" stroke-width=".8"/><path d="M32 39q1-3 4-5" fill="none" stroke="#67e" stroke-width="1.200"/><path d="M61 44h5" stroke="#ddd"/></svg>
<svg class="triad end-0 bottom-0"><path d="M14.500 28V12" stroke="#2a8a2a"/><path d="M14.500 9l-2 5h4z" fill="#2a8a2a"/><path d="M15 28h13" stroke="#922"/><path d="M31 28l-6-2v4z" fill="#922"/><circle cx="14.500" cy="28" r="2" fill="#228"/></svg>
</div>
<div class="doctabs d-flex justify-content-center"><button><svg width="8" height="8" viewBox="0 0 8 8"><path d="M1 1l6 6M7 1L1 7" stroke="#fff"/></svg>&nbsp; Unnamed : 1*</button></div>
</section>
</main>

<footer class="status d-flex align-items-center">
<span>Preselected: Unnamed.Body.Sketch.Edge5 (83.633018 mm,26.579659 mm,8.000000 µm)</span>
<span class="navi ms-auto me-4 d-flex align-items-center"><svg width="8" height="11" viewBox="0 0 8 11"><rect x=".7" y=".7" width="6.600" height="9.600" rx="3" fill="none" stroke="#333"/><path d="M2 3l2 2 2-2M4 2v4M2 7h4" fill="none" stroke="#333"/></svg>MayaGesture</span>
<span>174.88 mm x 100.00 mm</span>
</footer>

<div class="ctx" role="menu">
<div class="g1">
<button><svg><use href="#coin"/></svg>Point Coincidence</button>
<button><svg><use href="#pobj"/></svg>Point on Object</button>
<button><svg><use href="#vert"/></svg>Vertical Constraint</button>
<button><svg><use href="#hori"/></svg>Horizontal Constraint</button>
<button><svg><use href="#para"/></svg>Parallel Constraint</button>
<button><svg><use href="#perp"/></svg>Perpendicular Constraint</button>
<button><svg><use href="#tang"/></svg>Tangent Constraint</button>
<button><svg><use href="#equal"/></svg>Equal Length</button>
<button><svg><use href="#symm"/></svg>Symmetric</button>
<button><svg><use href="#block"/></svg>Block Constraint</button>
<button><svg><use href="#lock"/></svg>Lock Constraint</button>
<button><svg><use href="#hd"/></svg>Horizontal Distance</button>
<button><svg><use href="#vd"/></svg>Vertical Distance</button>
<button><svg><use href="#len"/></svg>Length Constraint</button>
<button><svg><use href="#rad"/></svg>Radius Constraint</button>
<button><svg><use href="#dia"/></svg>Diameter Constraint</button>
<button><svg><use href="#ang"/></svg>Angle Constraint</button>
</div><hr>
<div class="g2"><button><svg><use href="#cons"/></svg>Toggle construction line</button></div><hr>
<div class="g3">
<button><svg><use href="#close"/></svg>Close Shape</button>
<button><svg><use href="#conn"/></svg>Connect</button>
<button><svg><use href="#selc"/></svg>Select Constraints</button>
<button><svg><use href="#so"/></svg>Select Origin</button>
<button><svg><use href="#sh"/></svg>Select Horizontal Axis</button>
<button><svg><use href="#sv"/></svg>Select Vertical Axis</button>
</div><hr>
<div class="g2"><button>削除</button></div>
</div>
<div class="ring"></div>
<script src="https://cdn.jsdelivr.net/npm/bootstrap@5.3.0/dist/js/bootstrap.bundle.min.js"></script>
</body>
</html>
